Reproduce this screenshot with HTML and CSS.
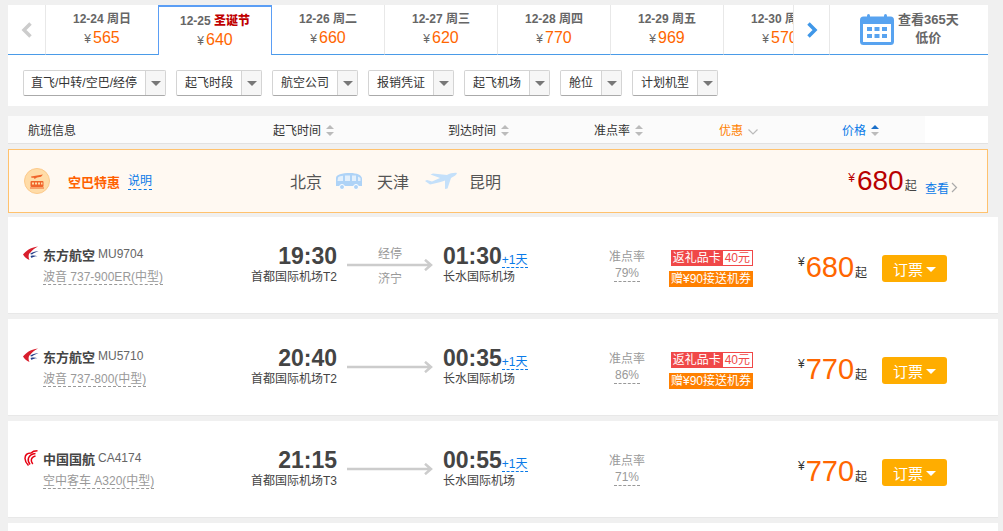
FILE: index.html
```html
<!DOCTYPE html>
<html lang="zh-CN">
<head>
  <meta charset="UTF-8">
  <title>机票列表</title>
  <link rel="stylesheet" href="styles.css">
</head>
<body>
  <svg class="defs" width="0" height="0">
    <symbol id="logo-mu" viewBox="0 0 16 16">
      <path d="M0 8.500C3 5 7 1.500 15 0.500C11 2.500 9 4.500 7.500 6.500C5.500 7.500 5 11 6.500 14C3.500 13 1.500 11 0 8.500Z" fill="#d81e2c"/>
      <path d="M7 8C9.500 5.800 12.500 5 15.500 5.200C12.500 6 10.500 7.200 9 8.500Z" fill="#27408b"/>
      <path d="M7.500 10C10 9.200 12.500 9.400 14.500 10.200C12 10.200 10 10.800 8.500 12Z" fill="#27408b"/>
    </symbol>
    <symbol id="logo-ca" viewBox="0 0 14 16">
      <g fill="none" stroke="#e60012" stroke-width="1.500">
        <path d="M13.500 0.800C10.500 0.800 8.500 1.500 7 3C3.500 3 1 5 1 8.500C1 11 2.500 13.500 4.500 15.500"/>
        <path d="M11.500 3.500C8.500 3.800 5.500 5.500 4.500 8C3.800 10 4.500 12.500 6 14.500"/>
        <path d="M11.500 6C9.500 6.500 7.500 8 7.300 10C7.200 11.500 7.800 12.800 8.800 14"/>
      </g>
    </symbol>
  </svg>

  <div class="top-panel">
    <div class="date-bar">
      <a class="date-nav">
        <svg width="12" height="16" viewBox="0 0 12 16"><path d="M9.500 1.500L3 8L9.500 14.500" fill="none" stroke="#ccc" stroke-width="3.500"/></svg>
      </a>
      <div class="date-tabs">
        <div class="date-tab"><div class="date-label">12-24 周日</div><div class="date-price"><i>¥</i>565</div></div>
        <div class="date-tab selected"><div class="date-label">12-25 <b>圣诞节</b></div><div class="date-price"><i>¥</i>640</div></div>
        <div class="date-tab"><div class="date-label">12-26 周二</div><div class="date-price"><i>¥</i>660</div></div>
        <div class="date-tab"><div class="date-label">12-27 周三</div><div class="date-price"><i>¥</i>620</div></div>
        <div class="date-tab"><div class="date-label">12-28 周四</div><div class="date-price"><i>¥</i>770</div></div>
        <div class="date-tab"><div class="date-label">12-29 周五</div><div class="date-price"><i>¥</i>969</div></div>
        <div class="date-tab"><div class="date-label">12-30 周六</div><div class="date-price"><i>¥</i>570</div></div>
      </div>
      <a class="date-nav next">
        <svg width="12" height="16" viewBox="0 0 12 16"><path d="M2.500 1.500L9 8L2.500 14.500" fill="none" stroke="#3f97e8" stroke-width="3.500"/></svg>
      </a>
      <a class="calendar-link">
        <svg width="34" height="32" viewBox="0 0 34 32">
          <rect x="1.500" y="5" width="31" height="25.500" rx="2" fill="#fff" stroke="#58a3f0" stroke-width="3"/>
          <rect x="1.500" y="5" width="31" height="6" fill="#58a3f0"/>
          <rect x="7" y="1" width="3" height="8" rx="1.500" fill="#58a3f0"/>
          <rect x="24" y="1" width="3" height="8" rx="1.500" fill="#58a3f0"/>
          <path d="M7 14h5v4H7zM14.500 14h5v4h-5zM22 14h5v4h-5zM7 21h5v4H7zM14.500 21h5v4h-5zM22 21h5v4h-5z" fill="#58a3f0"/>
        </svg>
        <span class="calendar-text">查看365天<br>低价</span>
      </a>
    </div>
    <div class="filters">
      <div class="filter"><span>直飞/中转/空巴/经停</span><i></i></div>
      <div class="filter"><span>起飞时段</span><i></i></div>
      <div class="filter"><span>航空公司</span><i></i></div>
      <div class="filter"><span>报销凭证</span><i></i></div>
      <div class="filter"><span>起飞机场</span><i></i></div>
      <div class="filter"><span>舱位</span><i></i></div>
      <div class="filter"><span>计划机型</span><i></i></div>
    </div>
  </div>

  <div class="sort-bar">
    <div>航班信息</div>
    <div>起飞时间<i class="sort"></i></div>
    <div>到达时间<i class="sort"></i></div>
    <div>准点率<i class="sort"></i></div>
    <div class="sort-promo">优惠<svg width="10" height="6" viewBox="0 0 10 6"><path d="M0.500 0.500L5 5L9.500 0.500" fill="none" stroke="#bbb" stroke-width="1.200"/></svg></div>
    <div class="sort-price">价格<i class="sort active"></i></div>
  </div>

  <div class="bus-deal">
    <div class="deal-lead">
      <svg class="deal-icon" width="26" height="26" viewBox="0 0 26 26">
        <circle cx="13" cy="13" r="12.500" fill="#ffdca8" stroke="#fcc98a"/>
        <path d="M7 8.500L19 6.500L17 8.800L13 9.500L10.500 11L10 9.800L7.500 9.800Z" fill="#f0642a"/>
        <rect x="6.500" y="13" width="13" height="6" rx="1" fill="#f0642a"/>
        <path d="M8 14.500h2v2H8zM11 14.500h2v2h-2zM14 14.500h2v2h-2zM17 14.500h1.500v2H17z" fill="#ffdca8"/>
        <path d="M6 19.500h14v1H6z" fill="#f0642a"/>
      </svg>
      <span class="deal-name">空巴特惠</span>
      <a class="deal-help">说明</a>
    </div>
    <div class="deal-route">
      <span>北京</span>
      <svg class="route-bus" width="28" height="18" viewBox="0 0 28 18">
        <path d="M1 6C1 2.500 7 1 15 1C22 1 27 3 27 7V14H1Z" fill="#aed3f7"/>
        <path d="M3 5.500C4 4.500 6 4 8 3.800V9H2.500zM10 3.500h5V9h-5zM17 3.500h4V9h-4zM23 4.500L25.500 6V9H23z" fill="#e3f0fc"/>
        <circle cx="7" cy="15" r="2.500" fill="#aed3f7" stroke="#fff"/>
        <circle cx="21" cy="15" r="2.500" fill="#aed3f7" stroke="#fff"/>
      </svg>
      <span>天津</span>
      <svg class="route-plane" width="34" height="18" viewBox="0 0 34 18">
        <path d="M33 1C30 0.500 26 1.500 23 3L9 1.500L6.500 2.500L16 6L8 9.500L3 8L1 9L6 12.500C12 11.500 18 9.500 21 8.500L21 17L23.500 16.500L27 6C30 4.500 32.500 3 33 1Z" fill="#c4e0fa"/>
      </svg>
      <span>昆明</span>
    </div>
    <div class="deal-price">
      <i>¥</i><strong>680</strong><em>起</em>
      <a>查看<svg width="7" height="11" viewBox="0 0 7 11"><path d="M1 1L5.500 5.500L1 10" fill="none" stroke="#aaa" stroke-width="1.200"/></svg></a>
    </div>
  </div>

  <div class="flight">
    <div class="airline">
      <div class="airline-name"><svg width="16" height="16"><use href="#logo-mu"/></svg><b>东方航空</b><span>MU9704</span></div>
      <div class="plane-type"><span>波音 737-900ER(中型)</span></div>
    </div>
    <div class="depart"><div class="time">19:30</div><div class="airport">首都国际机场T2</div></div>
    <div class="stop">
      <div>经停</div>
      <svg width="86" height="12" viewBox="0 0 86 12"><path d="M0 6H84M78 0.800L84 6L78 11.200" fill="none" stroke="#ccc" stroke-width="2.500"/></svg>
      <div>济宁</div>
    </div>
    <div class="arrive"><div class="time">01:30<a>+1天</a></div><div class="airport">长水国际机场</div></div>
    <div class="ontime"><div>准点率</div><span>79%</span></div>
    <div class="promo">
      <div class="promo-card">返礼品卡<span>40元</span></div>
      <div class="promo-ticket">赠¥90接送机券</div>
    </div>
    <div class="price"><i>¥</i><strong>680</strong><em>起</em></div>
    <a class="book">订票<i></i></a>
  </div>

  <div class="flight">
    <div class="airline">
      <div class="airline-name"><svg width="16" height="16"><use href="#logo-mu"/></svg><b>东方航空</b><span>MU5710</span></div>
      <div class="plane-type"><span>波音 737-800(中型)</span></div>
    </div>
    <div class="depart"><div class="time">20:40</div><div class="airport">首都国际机场T2</div></div>
    <div class="stop">
      <svg width="86" height="12" viewBox="0 0 86 12"><path d="M0 6H84M78 0.800L84 6L78 11.200" fill="none" stroke="#ccc" stroke-width="2.500"/></svg>
    </div>
    <div class="arrive"><div class="time">00:35<a>+1天</a></div><div class="airport">长水国际机场</div></div>
    <div class="ontime"><div>准点率</div><span>86%</span></div>
    <div class="promo">
      <div class="promo-card">返礼品卡<span>40元</span></div>
      <div class="promo-ticket">赠¥90接送机券</div>
    </div>
    <div class="price"><i>¥</i><strong>770</strong><em>起</em></div>
    <a class="book">订票<i></i></a>
  </div>

  <div class="flight">
    <div class="airline">
      <div class="airline-name"><svg width="16" height="16"><use href="#logo-ca"/></svg><b>中国国航</b><span>CA4174</span></div>
      <div class="plane-type"><span>空中客车 A320(中型)</span></div>
    </div>
    <div class="depart"><div class="time">21:15</div><div class="airport">首都国际机场T3</div></div>
    <div class="stop">
      <svg width="86" height="12" viewBox="0 0 86 12"><path d="M0 6H84M78 0.800L84 6L78 11.200" fill="none" stroke="#ccc" stroke-width="2.500"/></svg>
    </div>
    <div class="arrive"><div class="time">00:55<a>+1天</a></div><div class="airport">长水国际机场</div></div>
    <div class="ontime"><div>准点率</div><span>71%</span></div>
    <div class="promo"></div>
    <div class="price"><i>¥</i><strong>770</strong><em>起</em></div>
    <a class="book">订票<i></i></a>
  </div>

  <div class="flight"></div>
</body>
</html>
```

FILE: styles.css
```css
html {
  height: 100%;
  overflow: hidden;
}

body {
  margin: 0;
  padding: 5px 0 0 8px;
  background-color: #f0f0f0;
  font-family: "Liberation Sans", "Noto Sans CJK SC", sans-serif;
  font-size: 12px;
  color: #333;
}

i,
em {
  font-style: normal;
}

.defs {
  display: block;
  height: 0;
}

/* Date bar */
.top-panel {
  width: 980px;
  height: 101px;
  background-color: #fff;
}

.date-bar {
  display: flex;
  height: 50px;
}

.date-nav {
  display: flex;
  align-items: center;
  justify-content: center;
  flex: none;
  box-sizing: border-box;
  width: 38px;
  border-bottom: 1px solid #4a9be8;
  border-right: 1px solid #e8e8e8;
}

.date-nav.next {
  width: 37px;
  border-left: 1px solid #e8e8e8;
}

.date-tabs {
  display: flex;
  flex: none;
  width: 747px;
  overflow: hidden;
}

.date-tab {
  flex: none;
  box-sizing: border-box;
  width: 113px;
  height: 50px;
  padding-top: 5px;
  border-right: 1px solid #e8e8e8;
  border-bottom: 1px solid #4a9be8;
  text-align: center;
}

.date-tab.selected {
  width: 114px;
  margin-left: -1px;
  border: 1px solid #5b9ef5;
  border-top-width: 2px;
  border-bottom: 0;
}

.date-label {
  height: 18px;
  line-height: 18px;
  font-weight: bold;
  color: #666;
}

.date-label b {
  color: #c00000;
}

.date-price {
  height: 20px;
  line-height: 20px;
  font-size: 16px;
  color: #ff6600;
}

.date-price i {
  margin-right: 2px;
  font-size: 12px;
  color: #666;
}

.calendar-link {
  display: flex;
  align-items: center;
  flex: 1;
  gap: 4px;
  padding: 0 0 2px 30px;
  border-bottom: 1px solid #4a9be8;
}

.calendar-text {
  line-height: 18px;
  font-size: 13px;
  font-weight: bold;
  text-align: center;
  color: #666;
}

/* Filters */
.filters {
  display: flex;
  gap: 10px;
  padding: 15px 0 0 15px;
}

.filter {
  display: flex;
  box-sizing: border-box;
  height: 26px;
  line-height: 25px;
  border: 1px solid #d4d4d4;
  border-bottom-color: #aaa;
  border-radius: 2px;
}

.filter span {
  padding: 0 8px;
  color: #333;
}

.filter:first-child span {
  padding: 0 8px 0 7px;
}

.filter i {
  position: relative;
  width: 19px;
  border-left: 1px solid #d4d4d4;
  background-color: #f6f6f6;
}

.filter i::after {
  content: "";
  position: absolute;
  top: 10px;
  left: 5px;
  border-top: 5px solid #777;
  border-left: 5px solid transparent;
  border-right: 5px solid transparent;
}

/* Sort bar */
.sort-bar {
  display: grid;
  grid-template-columns: 245px 175px 146px 125px 123px 1fr;
  box-sizing: border-box;
  width: 980px;
  height: 28px;
  margin-top: 10px;
  padding-left: 20px;
  line-height: 30px;
  background: linear-gradient(90deg, #fbfbfb 917px, #fff 917px);
  border-bottom: 1px solid #e2e2e2;
}

.sort {
  position: relative;
  display: inline-block;
  width: 8px;
  height: 11px;
  margin-left: 5px;
  vertical-align: -1px;
}

.sort::before,
.sort::after {
  content: "";
  position: absolute;
  left: 0;
  border-left: 4px solid transparent;
  border-right: 4px solid transparent;
}

.sort::before {
  top: 0;
  border-bottom: 4px solid #bbb;
}

.sort::after {
  bottom: 0;
  border-top: 4px solid #bbb;
}

.sort.active::before {
  border-bottom-color: #1a6fc9;
}

.sort-promo {
  color: #ff7f00;
}

.sort-promo svg {
  margin-left: 5px;
}

.sort-price {
  color: #0a7ae8;
}

/* Bus deal banner */
.bus-deal {
  display: flex;
  align-items: center;
  box-sizing: border-box;
  width: 980px;
  height: 64px;
  margin-top: 5px;
  margin-bottom: 4px;
  padding: 0 29px 0 15px;
  background-color: #fff9f2;
  border: 1px solid #ffc26e;
}

.deal-lead {
  display: flex;
  align-items: center;
  flex: none;
  width: 266px;
}

.deal-name {
  margin-left: 18px;
  font-size: 13px;
  font-weight: bold;
  color: #ff6000;
}

.deal-help {
  margin: 1px 0 0 8px;
  border-bottom: 1px dashed #0a7ae8;
  line-height: 15px;
  color: #0a7ae8;
}

.deal-route {
  display: flex;
  align-items: center;
  gap: 13px;
  font-size: 16px;
  color: #555;
}

.route-bus {
  margin-right: 1px;
}

.route-plane {
  margin: 0 -2px 0 2px;
}

.deal-price {
  margin-left: auto;
  white-space: nowrap;
}

.deal-price i {
  position: relative;
  top: -8px;
  margin-right: 2px;
  color: #b80000;
}

.deal-price strong {
  font-size: 28px;
  font-weight: normal;
  color: #b80000;
}

.deal-price em {
  margin-left: 1px;
  color: #444;
}

.deal-price a {
  position: relative;
  top: 3px;
  margin-left: 5px;
  color: #0a7ae8;
}

.deal-price svg {
  margin-left: 2px;
}

/* Flight rows */
.flight {
  display: grid;
  grid-template-columns: 217px 97px 106px 154px 60px 96px 129px 65px;
  align-items: center;
  box-sizing: border-box;
  width: 990px;
  height: 97px;
  margin-bottom: 5px;
  padding-left: 15px;
  background-color: #fff;
  border-bottom: 1px solid #e8e8e8;
}

.airline-name {
  display: flex;
  align-items: center;
  height: 16px;
}

.airline-name b {
  margin-left: 4px;
  font-size: 13px;
  color: #444;
}

.airline-name span {
  margin-left: 3px;
  color: #666;
}

.plane-type {
  margin: 5px 0 0 20px;
  color: #999;
}

.plane-type span {
  border-bottom: 1px dashed #999;
}

.time {
  height: 22px;
  line-height: 22px;
  font-size: 23px;
  font-weight: bold;
  color: #444;
}

.time a {
  font-size: 12px;
  font-weight: normal;
  color: #0a7ae8;
  border-bottom: 1px dashed #0a7ae8;
}

.airport {
  margin-top: 2px;
  line-height: 17px;
  color: #444;
}

.depart {
  text-align: right;
}

.stop {
  display: flex;
  flex-direction: column;
  align-items: center;
  margin-top: 2px;
  line-height: 17px;
  color: #999;
}

.stop svg {
  margin: -4px 0 -2px;
}

.stop svg + div {
  margin: 2px 0 -2px;
}

.ontime {
  text-align: center;
  line-height: 16px;
  color: #999;
}

.ontime span {
  display: inline-block;
  width: 26px;
  border-bottom: 1px dashed #999;
}

.promo {
  display: flex;
  flex-direction: column;
  align-items: flex-end;
  gap: 5px;
  margin-top: 7px;
}

.promo-card {
  display: flex;
  height: 16px;
  padding-left: 2px;
  line-height: 16px;
  color: #fff;
  background-color: #f04848;
}

.promo-card span {
  box-sizing: border-box;
  height: 14px;
  margin: 1px 1px 0 2px;
  padding: 0 2px;
  line-height: 14px;
  color: #f04848;
  background-color: #fff;
}

.promo-ticket {
  height: 16px;
  padding: 0 2px;
  line-height: 16px;
  color: #fff;
  background-color: #ff8000;
}

.price {
  margin-top: 4px;
  padding-left: 45px;
  white-space: nowrap;
}

.price i {
  position: relative;
  top: -11px;
  margin-right: 1px;
  color: #333;
}

.price strong {
  font-size: 29px;
  font-weight: normal;
  color: #ff6600;
}

.price em {
  margin-left: 1px;
  color: #333;
}

.book {
  display: flex;
  align-items: center;
  justify-content: center;
  gap: 3px;
  height: 27px;
  margin-top: 7px;
  font-size: 15px;
  color: #fff;
  background-color: #ffad00;
  border-radius: 3px;
}

.book i {
  margin-top: 2px;
  border-top: 5px solid #fff;
  border-left: 5px solid transparent;
  border-right: 5px solid transparent;
}
```
